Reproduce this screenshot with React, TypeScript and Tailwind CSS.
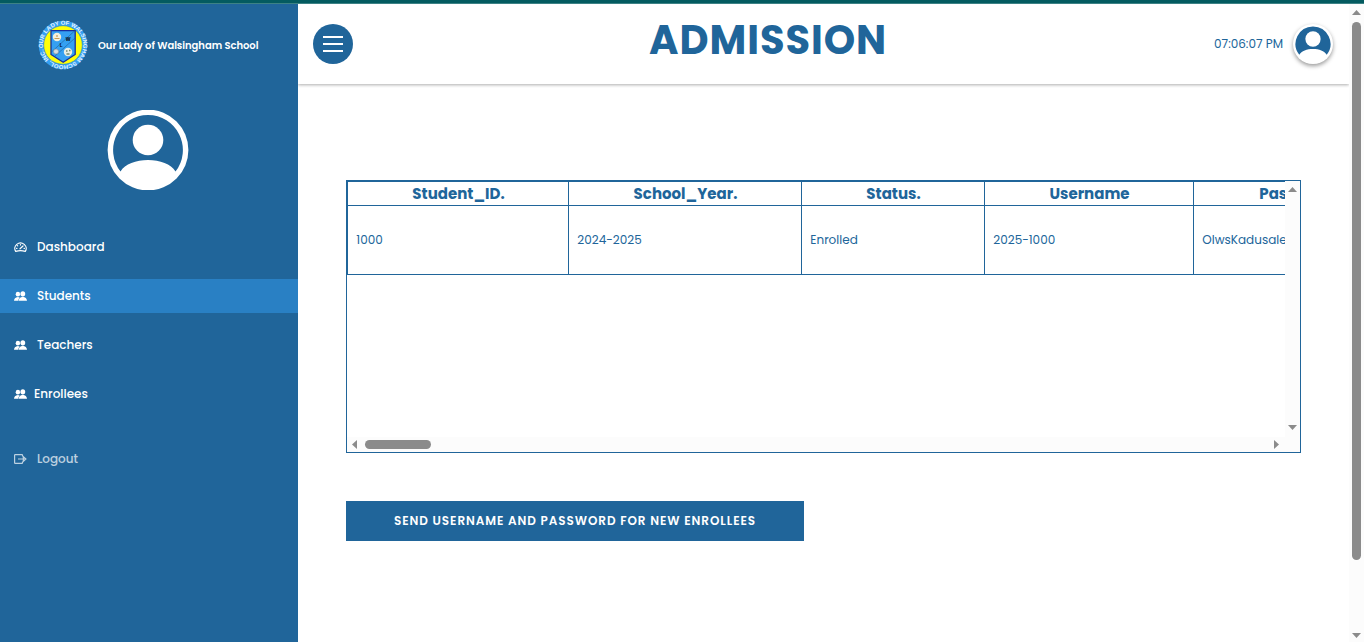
import React from 'react';

function PeopleIcon() {
  return (
    <svg className="h-[10px] w-[13px] shrink-0" viewBox="0 0 13 10" fill="currentColor">
      <ellipse cx="3.900" cy="3.200" rx="2.200" ry="2.400" />
      <path d="M0 9.800Q0 6.400 3.900 5.900Q5 6 5.700 6.400Q4.400 7.600 4.200 9.800Z" />
      <ellipse cx="8.800" cy="2.800" rx="2.400" ry="2.600" />
      <path d="M4.600 9.800Q4.900 6.200 8.800 5.800Q12.700 6.200 13 9.800Z" />
    </svg>
  );
}

function GaugeIcon() {
  return (
    <svg className="h-[11px] w-[13px] shrink-0" viewBox="0 0 13 11" fill="none" stroke="currentColor" strokeWidth="1.2" strokeLinecap="round">
      <path d="M1.700 9.400A5.700 5.400 0 1 1 11.300 9.400Q6.500 7.800 1.700 9.400Z" strokeLinejoin="round" />
      <path d="M6 6.800 9 4M6.500 2.500v.5M3.400 3.600l.3.300M2.500 6.300H3M10 6.300h.5" />
    </svg>
  );
}

function ExitIcon() {
  return (
    <svg className="h-[10px] w-[13px] shrink-0" viewBox="0 0 13 10" fill="none" stroke="currentColor">
      <path d="M8.500 2.500V1.200Q8.500.6 7.900.6H1.200Q.6.6.6 1.200V8.800Q.6 9.400 1.200 9.400H7.900Q8.500 9.400 8.500 8.800V7.500" strokeWidth="1.200" />
      <path d="M4 5H10M9.300 2.700 11.900 5 9.300 7.300Z" strokeWidth="1.200" fill="currentColor" fillOpacity=".5" />
    </svg>
  );
}

function Avatar({ className }: { className: string }) {
  return (
    <svg className={className} viewBox="-1 0 82 80">
      <path
        fill="currentColor"
        fillRule="evenodd"
        d="M40-.4a40.400 40.400 0 1 1 0 80.800a40.400 40.400 0 0 1 0-80.800ZM40 5A35 35 0 0 0 12.500 61.500C17 54 28 50 40 50S63 54 67.500 61.500A35 35 0 0 0 40 5Z"
      />
      <circle cx="40" cy="30" r="15.300" fill="currentColor" />
    </svg>
  );
}

function SchoolLogo() {
  return (
    <svg className="h-[50px] w-[50px] shrink-0" viewBox="0 0 50 50">
      <defs>
        <path id="ring" d="M5 28A20.200 20.200 0 1 1 45 22A20.200 20.200 0 0 1 5 28" />
      </defs>
      <circle cx="25" cy="25" r="24.300" fill="#35a0f2" />
      <circle cx="25" cy="25" r="19.300" fill="#ffff08" stroke="#2c86b8" strokeWidth=".6" />
      <text fill="#e4f3ff" fontSize="5.900" fontWeight="700" fontFamily="Liberation Sans, sans-serif">
        <textPath href="#ring" textLength="125">OUR LADY OF WALSINGHAM SCHOOL, INC.</textPath>
      </text>
      <path d="M13 10.600H37.200V34.500L25.200 42.300L13 34.500Z" fill="#35a0f2" stroke="#182e9c" strokeWidth="1.300" />
      <path d="M13.500 32 36.500 11M17 36 37 18" stroke="#1d5f9a" strokeWidth=".6" />
      <circle cx="19" cy="17" r="4.200" fill="#f3efdc" />
      <path d="M16.500 18.500h5M19 15v2" stroke="#c69c55" strokeWidth="1.200" />
      <circle cx="18" cy="31.500" r="2.500" fill="#d3dce2" stroke="#8b8f96" strokeWidth=".6" />
      <circle cx="30" cy="32" r="4.200" fill="#e8eee6" />
      <path d="M28 31h1.500M31 30.500h1.500M28.500 34h3" stroke="#6f8a70" strokeWidth="1.300" />
      <text x="27.700" y="21.300" fontSize="5" fontWeight="700" fontFamily="Liberation Sans, sans-serif">W</text>
      <text x="21.700" y="27.300" fontSize="4.500" fontWeight="700" fontFamily="Liberation Sans, sans-serif">L</text>
    </svg>
  );
}

function Arrow({ dir }: { dir: 'up' | 'down' | 'left' | 'right' }) {
  const d = { up: 'M0 5 4.500 0 9 5Z', down: 'M0 0H9L4.500 5Z', left: 'M5 0V9L0 4.500Z', right: 'M0 0 5 4.500 0 9Z' }[dir];
  const vertical = dir === 'up' || dir === 'down';
  return (
    <svg className={vertical ? 'h-[5px] w-[9px] shrink-0' : 'h-[9px] w-[5px] shrink-0'} viewBox={vertical ? '0 0 9 5' : '0 0 5 9'}>
      <path d={d} fill="#8b8b8b" />
    </svg>
  );
}

const nav = [
  { label: 'Dashboard', icon: <GaugeIcon />, row: 'mb-[15px]', text: 'ml-[10px]' },
  { label: 'Students', icon: <PeopleIcon />, row: 'mb-[15px] bg-[#2980c4]', text: 'ml-[10px]' },
  { label: 'Teachers', icon: <PeopleIcon />, row: 'mb-[15px]', text: 'ml-[10px]' },
  { label: 'Enrollees', icon: <PeopleIcon />, row: 'mb-[31px]', text: 'ml-[7px]' },
  { label: 'Logout', icon: <ExitIcon />, row: 'opacity-70', text: 'ml-[10px]' },
];

const columns = [
  { head: 'Student_ID.', value: '1000', width: 'w-[221px]' },
  { head: 'School_Year.', value: '2024-2025', width: 'w-[233px]' },
  { head: 'Status.', value: 'Enrolled', width: 'w-[183px]' },
  { head: 'Username', value: '2025-1000', width: 'w-[209px]' },
  { head: 'Password', value: 'OlwsKadusale', width: 'w-[206px]' },
];

export default function App() {
  return (
    <div className="flex h-[642px] w-[1364px] flex-col overflow-hidden bg-white font-[Poppins,Inter,sans-serif] text-[#20659a]">
      <div className="h-1 shrink-0 border-b border-[#3d8285] bg-[#045b60]" />
      <div className="flex min-h-0 flex-1">
        <aside className="flex w-[298px] shrink-0 flex-col bg-[#20659a] text-white">
          <div className="flex h-[82px] items-center pl-[38px]">
            <SchoolLogo />
            <span className="ml-[10px] text-[10px] font-semibold tracking-[-0.04px] whitespace-nowrap">Our Lady of Walsingham School</span>
          </div>
          <Avatar className="mt-6 ml-[107px] h-20 w-[82px] shrink-0" />
          <nav className="mt-10 flex flex-col">
            {nav.map((n) => (
              <a key={n.label} className={`flex h-[34px] items-center pl-[14px] text-[12px] font-medium ${n.row}`}>
                {n.icon}
                <span className={n.text}>{n.label}</span>
              </a>
            ))}
          </nav>
        </aside>

        <main className="flex min-w-0 flex-1 flex-col">
          <header className="flex h-20 w-[1051px] shrink-0 items-center pl-[15px] shadow-[0_1px_3px_rgba(0,0,0,0.32)] [clip-path:inset(0_0_-6px_0)]">
            <button className="flex h-10 w-10 shrink-0 flex-col items-center justify-center gap-[5px] rounded-full bg-[#20659a]">
              <span className="h-[2px] w-5 bg-white" />
              <span className="h-[2px] w-5 bg-white" />
              <span className="h-[2px] w-5 bg-white" />
            </button>
            <h1 className="ml-[296px] w-[240px] pb-2 text-[40px] leading-none font-bold tracking-[0.95px] whitespace-nowrap">ADMISSION</h1>
            <span className="ml-auto text-[12px] whitespace-nowrap">07:06:07 PM</span>
            <span className="mr-4 ml-[10px] flex h-10 w-10 shrink-0 items-center justify-center rounded-full bg-white shadow-[0_2px_4px_rgba(0,0,0,0.4)]">
              <svg className="h-10 w-10" viewBox="0 0 80 80">
                <path d="M40 5A35 35 0 0 0 12.500 61.500C17 54 28 50 40 50S63 54 67.500 61.500A35 35 0 0 0 40 5Z" fill="#20659a" />
                <circle cx="40" cy="30" r="15.300" fill="#fff" />
              </svg>
            </span>
          </header>

          <section className="mt-24 ml-12 flex h-[273px] w-[955px] shrink-0 flex-col border border-[#20659a]">
            <div className="flex min-h-0 flex-1">
              <div className="flex w-[938px] overflow-hidden">
                <div className="flex h-[94px] shrink-0 border-t border-l border-[#20659a]">
                  {columns.map((c) => (
                    <div key={c.head} className={`flex shrink-0 flex-col border-r border-b border-[#20659a] ${c.width}`}>
                      <div className="flex h-6 items-center justify-center border-b border-[#20659a] pt-[2px] pl-px text-[15px] font-bold">{c.head}</div>
                      <div className="flex flex-1 items-center pl-[8.300px] text-[12px]">{c.value}</div>
                    </div>
                  ))}
                </div>
              </div>
              <div className="flex w-[15px] flex-col items-center justify-between bg-[#fcfcfc] pt-[6px] pb-[7px]">
                <Arrow dir="up" />
                <Arrow dir="down" />
              </div>
            </div>
            <div className="flex h-[15px] shrink-0 items-center bg-[#fcfcfc] pr-[21px] pl-[5px]">
              <Arrow dir="left" />
              <span className="mr-auto ml-2 h-[9px] w-[66px] rounded-full bg-[#8b8b8b]" />
              <Arrow dir="right" />
            </div>
          </section>

          <button className="mt-12 ml-12 h-10 w-[458px] shrink-0 bg-[#20659a] text-[12px] font-semibold tracking-[0.92px] whitespace-nowrap text-white">
            SEND USERNAME AND PASSWORD FOR NEW ENROLLEES
          </button>
        </main>

        <div className="flex w-[15px] shrink-0 flex-col items-center bg-[#fcfcfc] pt-[6px] pb-1">
          <Arrow dir="up" />
          <span className="mt-[7px] mb-auto h-[538px] w-[9px] rounded-full bg-[#8b8b8b]" />
          <Arrow dir="down" />
        </div>
      </div>
    </div>
  );
}
